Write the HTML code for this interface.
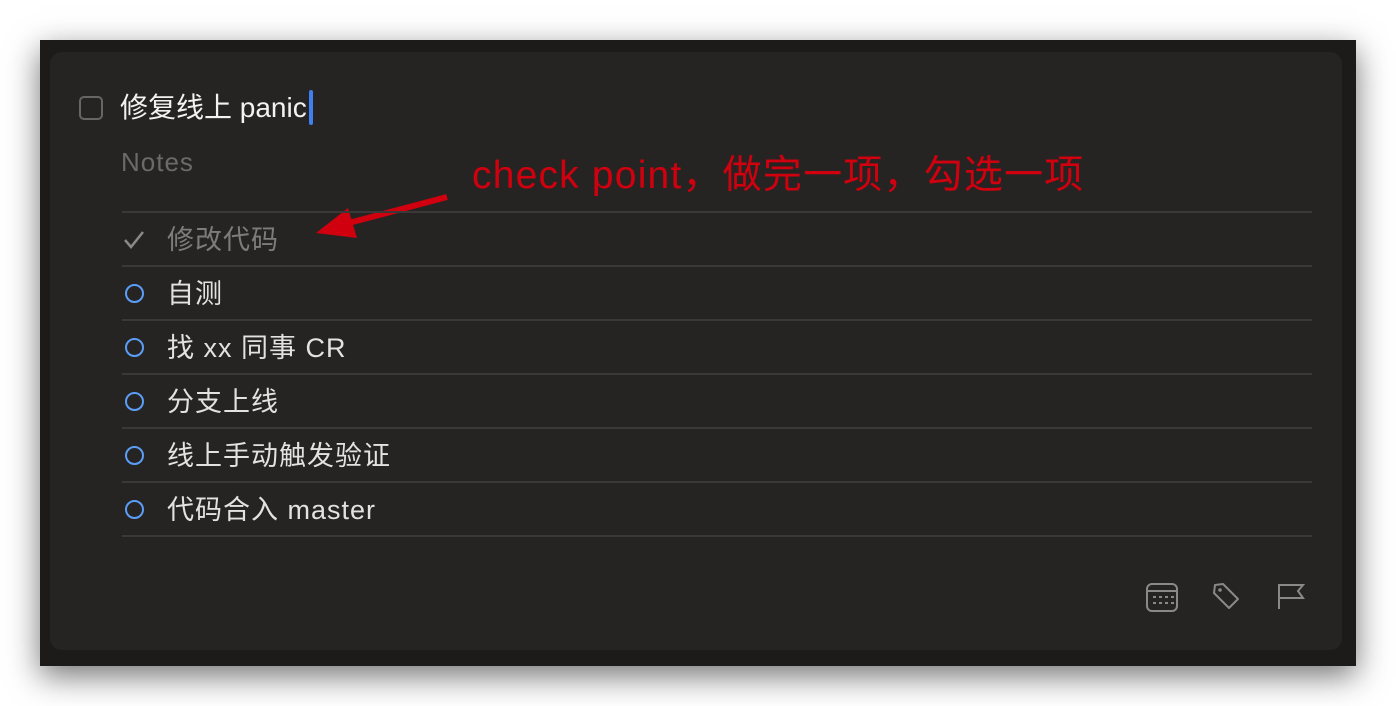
<!DOCTYPE html>
<html><head><meta charset="utf-8"><style>
html,body{margin:0;padding:0;background:#fff;width:1396px;height:706px;overflow:hidden;font-family:"Liberation Sans","Noto Sans CJK SC",sans-serif}
.win{position:absolute;left:40px;top:40px;width:1316px;height:626px;background:#1c1b1a;box-shadow:0 10px 30px rgba(0,0,0,.55)}
.card{position:absolute;left:50px;top:52px;width:1292px;height:598px;background:#252423;border-radius:12px}
.t{position:absolute;white-space:nowrap}
.line{position:absolute;left:122px;width:1190px;height:2px;background:#3a3938}
.circ{position:absolute;left:125px;width:15px;height:15px;border:2.5px solid #5b9ef7;border-radius:50%}
.item{position:absolute;left:167px;font-size:27px;letter-spacing:1px;color:#e2e2e2;line-height:30px;white-space:nowrap}
</style></head><body>
<div class="win"></div>
<div class="card"></div>
<div style="position:absolute;left:79px;top:96px;width:20px;height:20px;border:2px solid #666;border-radius:5px"></div>
<div class="t" style="left:120px;top:91px;font-size:28px;color:#f2f2f2;line-height:34px">修复线上 panic</div>
<div style="position:absolute;left:309px;top:90px;width:4px;height:35px;background:#3f7ff0;border-radius:2px"></div>
<div class="t" style="left:121px;top:147px;font-size:26px;letter-spacing:1px;color:#6b6a69;line-height:30px">Notes</div>
<div class="t" style="left:472px;top:154px;font-size:39px;letter-spacing:1.2px;color:#d0000f;line-height:44px">check point，做完一项，勾选一项</div>
<svg style="position:absolute;left:0;top:0" width="1396" height="706">
<line x1="447" y1="197" x2="345" y2="224" stroke="#d0000f" stroke-width="6"/>
<polygon points="316,233 348,208 357,238" fill="#d0000f"/>
<path d="M125 240 l6 7 l12 -15" stroke="#8a8988" stroke-width="2.5" fill="none"/>
<g stroke="#8a8988" stroke-width="2" fill="none">
<rect x="1147" y="584" width="30" height="27" rx="5"/>
<line x1="1147" y1="591" x2="1177" y2="591"/>
<path d="M1215 585 l8 -1 l15 15 l-9 9 l-15 -15 z" stroke-linejoin="round"/>
<line x1="1279" y1="584" x2="1279" y2="609"/>
<path d="M1280 585 h23 l-5 6 l5 7 h-23"/>
</g>
<g fill="#8a8988"><circle cx="1220" cy="590" r="1.8"/>
<rect x="1153" y="596" width="3" height="2"/><rect x="1159" y="596" width="3" height="2"/><rect x="1165" y="596" width="3" height="2"/><rect x="1171" y="596" width="3" height="2"/>
<rect x="1153" y="602" width="3" height="2"/><rect x="1159" y="602" width="3" height="2"/><rect x="1165" y="602" width="3" height="2"/><rect x="1171" y="602" width="3" height="2"/></g>
</svg>
<div class="line" style="top:211px"></div>
<div class="item" style="top:225px;color:#7d7c7b">修改代码</div>
<div class="line" style="top:265px"></div>
<div class="circ" style="top:284px"></div><div class="item" style="top:279px">自测</div>
<div class="line" style="top:319px"></div>
<div class="circ" style="top:338px"></div><div class="item" style="top:333px">找 xx 同事 CR</div>
<div class="line" style="top:373px"></div>
<div class="circ" style="top:392px"></div><div class="item" style="top:387px">分支上线</div>
<div class="line" style="top:427px"></div>
<div class="circ" style="top:446px"></div><div class="item" style="top:441px">线上手动触发验证</div>
<div class="line" style="top:481px"></div>
<div class="circ" style="top:500px"></div><div class="item" style="top:495px">代码合入 master</div>
<div class="line" style="top:535px"></div>
</body></html>
